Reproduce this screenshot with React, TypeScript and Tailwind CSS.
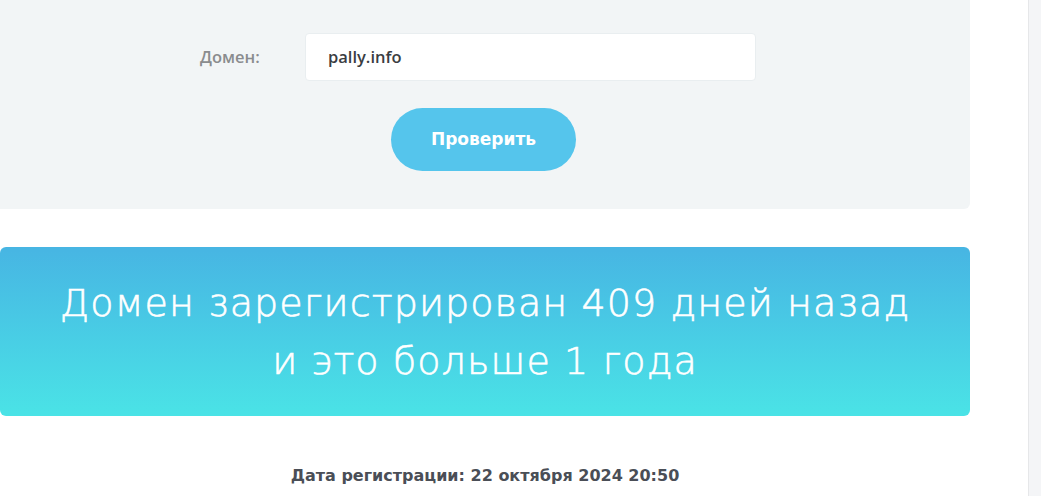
export default function App() {
  return (
    <div className="flex h-[496px] w-[1041px] overflow-hidden bg-white font-['Open_Sans',sans-serif]">
      <main className="w-[1028px] shrink-0">
        <div className="w-[970px]">
          <section className="h-[209px] rounded-br-md bg-[#f2f5f6] pt-[33px]">
            <div className="flex items-center pl-[200px]">
              <label className="w-[105px] text-[16.5px] font-semibold text-[#8a8c8e]">Домен:</label>
              <div className="flex h-[48px] w-[451px] items-center rounded-sm border border-[#e9eef0] bg-white pl-[22px] text-[16.5px] font-semibold text-[#3a3d42]">
                pally.info
              </div>
            </div>
            <div className="mt-[27px] flex justify-center pr-[3px]">
              <button className="h-[63px] w-[185px] rounded-full bg-[#55c5ec] font-['DejaVu_Sans',sans-serif] text-[17px] font-bold text-white">
                Проверить
              </button>
            </div>
          </section>

          <div className="mt-[38px] flex h-[169px] flex-col items-center justify-center rounded-md bg-gradient-to-b from-[#47b5e3] to-[#4ae3e6] text-center font-['DejaVu_Sans',sans-serif] text-[38px] font-light leading-[58px] tracking-[1.1px] text-white [-webkit-text-stroke:0.6px_white]">
            <p>Домен зарегистрирован 409 дней назад</p>
            <p>и это больше 1 года</p>
          </div>

          <p className="mt-[48px] text-center font-['DejaVu_Sans',sans-serif] text-[16px] font-bold text-[#4a4e56]">
            Дата регистрации: 22 октября 2024 20:50
          </p>
        </div>
      </main>
      <aside className="w-[13px] shrink-0 border-l border-[#e6e7e9] bg-[#f4f5f7]" />
    </div>
  )
}
